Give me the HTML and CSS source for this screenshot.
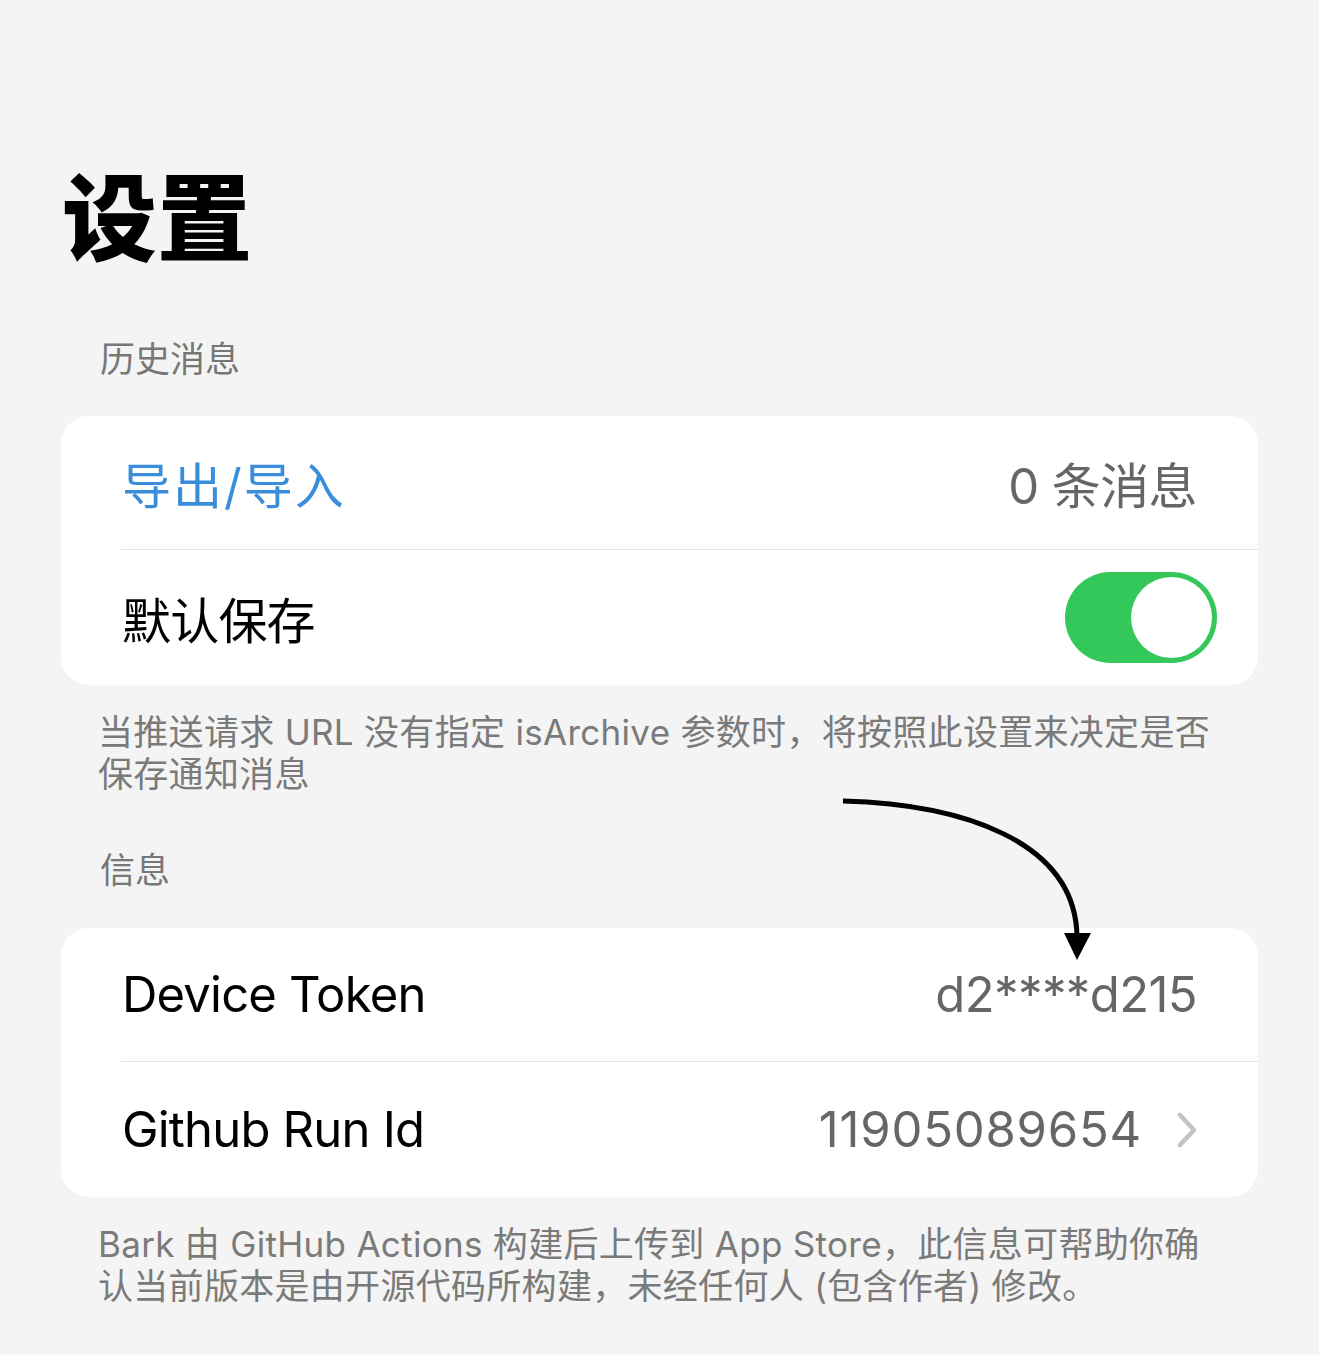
FILE: index.html
```html
<!DOCTYPE html>
<html lang="zh-CN">
<head>
    <meta charset="UTF-8">
    <meta name="viewport" content="width=device-width, initial-scale=1.0">
    <title>设置</title>
    <link rel="stylesheet" href="styles.css">
</head>
<body>
    <div class="page">
        <h1 class="title">设置</h1>

        <div class="section-header">历史消息</div>
        <div class="card">
            <div class="row">
                <div class="cell">
                    <span class="label link">导出/导入</span>
                    <span class="value">0 条消息</span>
                </div>
            </div>
            <div class="row">
                <div class="cell cell-toggle">
                    <span class="label">默认保存</span>
                    <span class="switch on"><span class="knob"></span></span>
                </div>
            </div>
        </div>
        <p class="section-footer">当推送请求 URL 没有指定 isArchive 参数时，将按照此设置来决定是否保存通知消息</p>

        <div class="section-header section-header-2">信息</div>
        <div class="card">
            <div class="row">
                <div class="cell">
                    <span class="label">Device Token</span>
                    <span class="value">d2****d215</span>
                </div>
            </div>
            <div class="row">
                <div class="cell">
                    <span class="label">Github Run Id</span>
                    <span class="value"><span class="num">11905089654</span>
                        <svg class="chevron" width="20" height="36" viewBox="0 0 20 36">
                            <path d="M3 3 L17 18 L3 33" fill="none" stroke="#c4c4c6" stroke-width="4.5" stroke-linecap="round" stroke-linejoin="round"/>
                        </svg>
                    </span>
                </div>
            </div>
        </div>
        <p class="section-footer">Bark 由 GitHub Actions 构建后上传到 App Store，此信息可帮助你确认当前版本是由开源代码所构建，未经任何人 (包含作者) 修改。</p>

        <svg class="arrow" width="270" height="180" viewBox="835 790 270 180">
            <path d="M843 801 C 960 804 1075 840 1077 936" fill="none" stroke="#000" stroke-width="5"/>
            <polygon points="1064,933 1091,933 1077,960" fill="#000"/>
        </svg>
    </div>
</body>
</html>
```

FILE: styles.css
```css
body, html {
    margin: 0;
    padding: 0;
    background-color: #f4f4f4;
    font-family: Inter, "Noto Sans CJK SC", sans-serif;
}

.page {
    position: relative;
    padding: 165px 61px 40px;
    min-height: 1150px;
}

.title {
    margin: 0;
    font-size: 95px;
    line-height: 110px;
    font-weight: 800;
    color: #000;
    padding-left: 1px;
}

.section-header {
    margin: 63px 0 36px;
    padding-left: 39px;
    font-size: 35px;
    line-height: 42px;
    color: #777;
}

.section-header-2 {
    margin-top: 54px;
    margin-bottom: 37px;
}

.card {
    background-color: #fff;
    border-radius: 28px;
    overflow: hidden;
}

.row {
    height: 134px;
}

.row + .row {
    height: 135px;
}

.cell {
    height: 100%;
    margin-left: 60px;
    padding-right: 61px;
    display: flex;
    align-items: center;
    justify-content: space-between;
    box-sizing: border-box;
}

.row:first-child .cell {
    border-bottom: 1px solid #e4e4e4;
}

.cell-toggle {
    padding-right: 41px;
}

.label {
    font-size: 49px;
    letter-spacing: -0.8px;
    color: #000;
    padding-left: 1px;
}

.link {
    color: #3a8ddb;
    letter-spacing: 2px;
}

.value {
    font-size: 49px;
    letter-spacing: -0.6px;
    color: #666;
    display: flex;
    align-items: center;
}

.num {
    letter-spacing: 0.8px;
}

.chevron {
    margin-left: 35px;
}

.switch {
    width: 152px;
    height: 91px;
    border-radius: 46px;
    background-color: #34c759;
    position: relative;
}

.switch .knob {
    position: absolute;
    top: 5px;
    right: 5px;
    width: 81px;
    height: 81px;
    border-radius: 50%;
    background-color: #fff;
}

.section-footer {
    margin: 26px 0 0;
    padding: 0 40px 0 37px;
    font-size: 35px;
    letter-spacing: 0.3px;
    line-height: 42px;
    color: #7a7a7a;
}

.arrow {
    position: absolute;
    left: 835px;
    top: 790px;
}
```
